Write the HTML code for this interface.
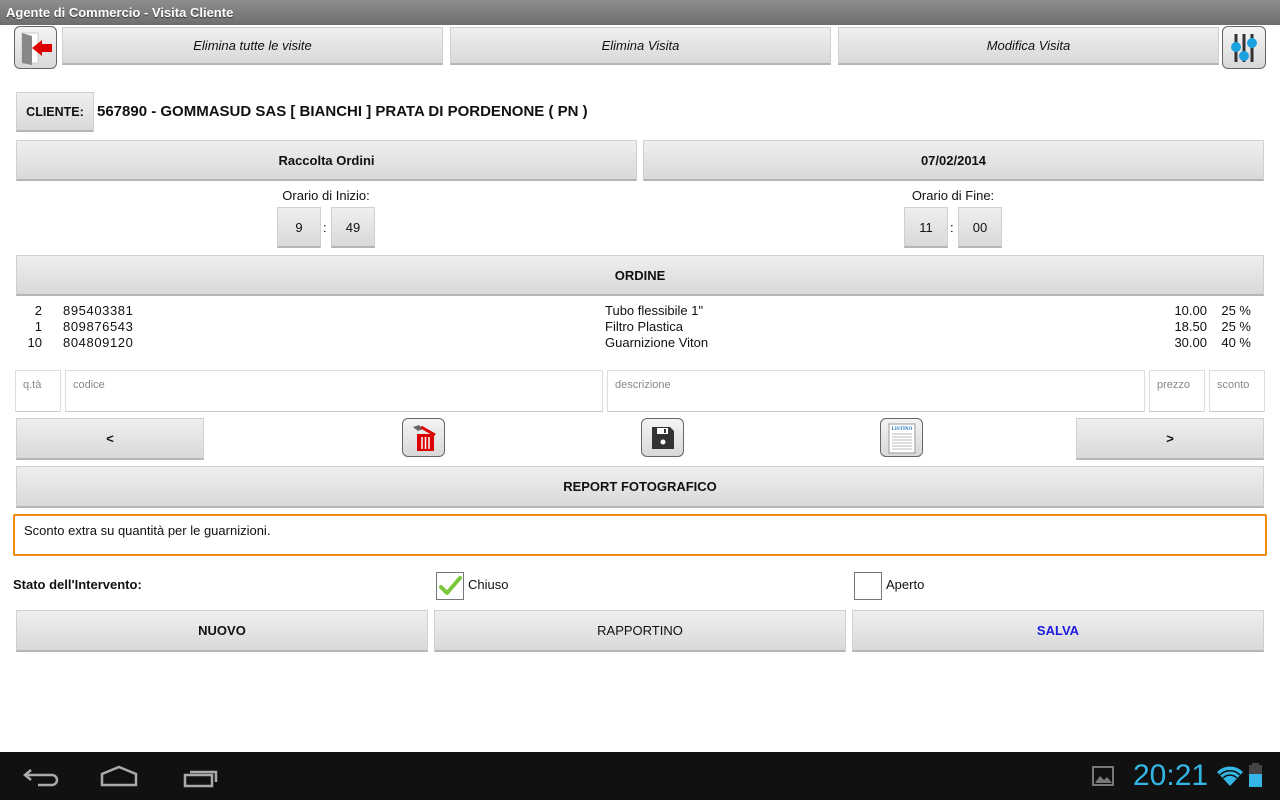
<!DOCTYPE html>
<html><head><meta charset="utf-8"><style>
*{margin:0;padding:0;box-sizing:border-box}
body{width:1280px;height:800px;position:relative;background:#fff;font-family:"Liberation Sans",sans-serif;overflow:hidden;color:#111}
.a{position:absolute}
.btn{position:absolute;background:linear-gradient(#efefef,#d9d9d9);border:1px solid #d0d0d0;border-bottom:2px solid #b5b5b5;display:flex;align-items:center;justify-content:center;font-size:13px;color:#111}
.b{font-weight:bold}
.i{font-style:italic}
.ib{position:absolute;background:linear-gradient(#f4f4f4,#d8d8d8);border:1px solid #666;border-radius:6px;display:flex;align-items:center;justify-content:center}
.inp{position:absolute;border:1px solid #ddd;border-bottom:1px solid #ccc;font-size:11px;color:#888;padding:8px 0 0 7px}
.t{position:absolute;font-size:13px;line-height:16px}
</style></head><body>
<div class="a" style="left:0;top:0;width:1280px;height:25px;background:linear-gradient(#8e8e8e,#6d6d6d);color:#fff;font-weight:bold;font-size:13px;padding:5px 0 0 6px;text-shadow:0 1px 1px #333">Agente di Commercio - Visita Cliente</div>

<div class="ib" style="left:14px;top:26px;width:43px;height:43px">
<svg width="36" height="34" viewBox="0 0 36 34"><rect x="4" y="2" width="16" height="30" fill="#fff" stroke="#ccc"/><polygon points="4,2 14,5 14,34 4,32" fill="#888"/><polygon points="14,17 24,9 24,13 34,13 34,21 24,21 24,25" fill="#d00"/></svg></div>
<div class="btn i" style="left:62px;top:27px;width:381px;height:38px">Elimina tutte le visite</div>
<div class="btn i" style="left:450px;top:27px;width:381px;height:38px">Elimina Visita</div>
<div class="btn i" style="left:838px;top:27px;width:381px;height:38px">Modifica Visita</div>
<div class="ib" style="left:1222px;top:26px;width:44px;height:43px">
<svg width="30" height="32" viewBox="0 0 30 32"><g stroke="#333" stroke-width="3"><line x1="7" y1="2" x2="7" y2="30"/><line x1="15" y1="2" x2="15" y2="30"/><line x1="23" y1="2" x2="23" y2="30"/></g><circle cx="7" cy="15" r="5" fill="#1aa3e0"/><circle cx="15" cy="24" r="5" fill="#1aa3e0"/><circle cx="23" cy="11" r="5" fill="#1aa3e0"/></svg></div>

<div class="btn b" style="left:16px;top:92px;width:78px;height:40px;font-size:12.5px">CLIENTE:</div>
<div class="t b" style="left:97px;top:103px;font-size:15px;line-height:18px">567890 - GOMMASUD SAS [ BIANCHI ] PRATA DI PORDENONE ( PN )</div>

<div class="btn b" style="left:16px;top:140px;width:621px;height:41px">Raccolta Ordini</div>
<div class="btn b" style="left:643px;top:140px;width:621px;height:41px">07/02/2014</div>

<div class="t" style="left:226px;top:188px;width:200px;text-align:center">Orario di Inizio:</div>
<div class="btn" style="left:277px;top:207px;width:44px;height:41px">9</div>
<div class="t" style="left:323px;top:220px">:</div>
<div class="btn" style="left:331px;top:207px;width:44px;height:41px">49</div>
<div class="t" style="left:853px;top:188px;width:200px;text-align:center">Orario di Fine:</div>
<div class="btn" style="left:904px;top:207px;width:44px;height:41px">11</div>
<div class="t" style="left:950px;top:220px">:</div>
<div class="btn" style="left:958px;top:207px;width:44px;height:41px">00</div>

<div class="btn b" style="left:16px;top:255px;width:1248px;height:41px">ORDINE</div>

<div class="t" style="left:20px;top:303px;width:22px;text-align:right">2<br>1<br>10</div>
<div class="t" style="left:63px;top:303px;letter-spacing:0.6px">895403381<br>809876543<br>804809120</div>
<div class="t" style="left:605px;top:303px">Tubo flessibile 1"<br>Filtro Plastica<br>Guarnizione Viton</div>
<div class="t" style="left:1150px;top:303px;width:57px;text-align:right">10.00<br>18.50<br>30.00</div>
<div class="t" style="left:1214px;top:303px;width:37px;text-align:right">25 %<br>25 %<br>40 %</div>

<div class="inp" style="left:15px;top:370px;width:46px;height:42px">q.tà</div>
<div class="inp" style="left:65px;top:370px;width:538px;height:42px">codice</div>
<div class="inp" style="left:607px;top:370px;width:538px;height:42px">descrizione</div>
<div class="inp" style="left:1149px;top:370px;width:56px;height:42px">prezzo</div>
<div class="inp" style="left:1209px;top:370px;width:56px;height:42px">sconto</div>

<div class="btn b" style="left:16px;top:418px;width:188px;height:42px">&lt;</div>
<div class="ib" style="left:402px;top:418px;width:43px;height:39px">
<svg width="30" height="30" viewBox="0 0 30 30"><polygon points="4,4 10,2 14,6 9,8" fill="#666"/><line x1="12" y1="4" x2="26" y2="12" stroke="#d00" stroke-width="3"/><rect x="8" y="11" width="17" height="17" fill="#d00"/><g stroke="#fff" stroke-width="1.5"><line x1="13" y1="14" x2="13" y2="26"/><line x1="16.5" y1="14" x2="16.5" y2="26"/><line x1="20" y1="14" x2="20" y2="26"/></g></svg></div>
<div class="ib" style="left:641px;top:418px;width:43px;height:39px">
<svg width="26" height="26" viewBox="0 0 26 26"><path d="M2 2h18l4 4v18H2z" fill="#333"/><rect x="7" y="3" width="11" height="6" fill="#fff"/><rect x="14" y="4" width="2" height="4" fill="#333"/><circle cx="13" cy="17" r="2.5" fill="#fff"/></svg></div>
<div class="ib" style="left:880px;top:418px;width:43px;height:39px">
<svg width="32" height="32" viewBox="0 0 32 32"><rect x="3" y="2" width="26" height="29" fill="#fff" stroke="#999"/><text x="16" y="8" font-size="5" font-weight="bold" fill="#1a6fc0" text-anchor="middle" font-family="Liberation Serif">LISTINO</text><g stroke="#bbb"><line x1="6" y1="12" x2="26" y2="12"/><line x1="6" y1="15" x2="26" y2="15"/><line x1="6" y1="18" x2="26" y2="18"/><line x1="6" y1="21" x2="26" y2="21"/><line x1="6" y1="24" x2="26" y2="24"/><line x1="6" y1="27" x2="26" y2="27"/></g></svg></div>
<div class="btn b" style="left:1076px;top:418px;width:188px;height:42px">&gt;</div>

<div class="btn b" style="left:16px;top:466px;width:1248px;height:42px">REPORT FOTOGRAFICO</div>

<div class="a" style="left:13px;top:514px;width:1254px;height:42px;border:2px solid #f08a10;border-radius:2px;font-size:13px;padding:7px 0 0 9px">Sconto extra su quantità per le guarnizioni.</div>

<div class="t b" style="left:13px;top:577px">Stato dell'Intervento:</div>
<div class="a" style="left:436px;top:572px;width:28px;height:28px;border:1px solid #777">
<svg width="26" height="26" viewBox="0 0 26 26"><path d="M4 14l6 6L23 5" fill="none" stroke="#7bc83a" stroke-width="4" stroke-linecap="round" stroke-linejoin="round"/></svg></div>
<div class="t" style="left:468px;top:577px">Chiuso</div>
<div class="a" style="left:854px;top:572px;width:28px;height:28px;border:1px solid #777"></div>
<div class="t" style="left:886px;top:577px">Aperto</div>

<div class="btn b" style="left:16px;top:610px;width:412px;height:42px">NUOVO</div>
<div class="btn" style="left:434px;top:610px;width:412px;height:42px">RAPPORTINO</div>
<div class="btn b" style="left:852px;top:610px;width:412px;height:42px;color:#1a1ae0">SALVA</div>

<div class="a" style="left:0;top:752px;width:1280px;height:48px;background:#111">
<svg class="a" style="left:20px;top:12px" width="220" height="26" viewBox="0 0 220 26"><g fill="none" stroke="#aaa" stroke-width="2.5"><path d="M6 11h26a5 5 0 0 1 0 10H18"/><path d="M11 6L5 11l6 5"/><path d="M82 21V10l17-7 17 7v11z"/><rect x="165" y="11" width="27" height="11"/><path d="M170 8h26v10"/></g></svg>
<svg class="a" style="left:1092px;top:14px" width="22" height="20" viewBox="0 0 22 20"><rect x="1" y="1" width="20" height="18" fill="none" stroke="#777" stroke-width="2"/><path d="M3 17l5-7 4 4 3-3 5 6z" fill="#777"/></svg>
<div class="a" style="left:1133px;top:7px;font-size:30px;color:#33b5e5">20:21</div>
<svg class="a" style="left:1216px;top:13px" width="28" height="22" viewBox="0 0 28 22"><path d="M1 7a18 18 0 0 1 26 0L14 21z" fill="#33b5e5"/><g stroke="#111" stroke-width="1.5" fill="none"><path d="M4 10a14 14 0 0 1 20 0"/><path d="M7 13a10 10 0 0 1 14 0"/></g></svg>
<div class="a" style="left:1249px;top:13px;width:13px;height:22px;background:#444"></div>
<div class="a" style="left:1249px;top:22px;width:13px;height:13px;background:#33b5e5"></div>
<div class="a" style="left:1252px;top:11px;width:7px;height:2px;background:#444"></div>
</div>
</body></html>
